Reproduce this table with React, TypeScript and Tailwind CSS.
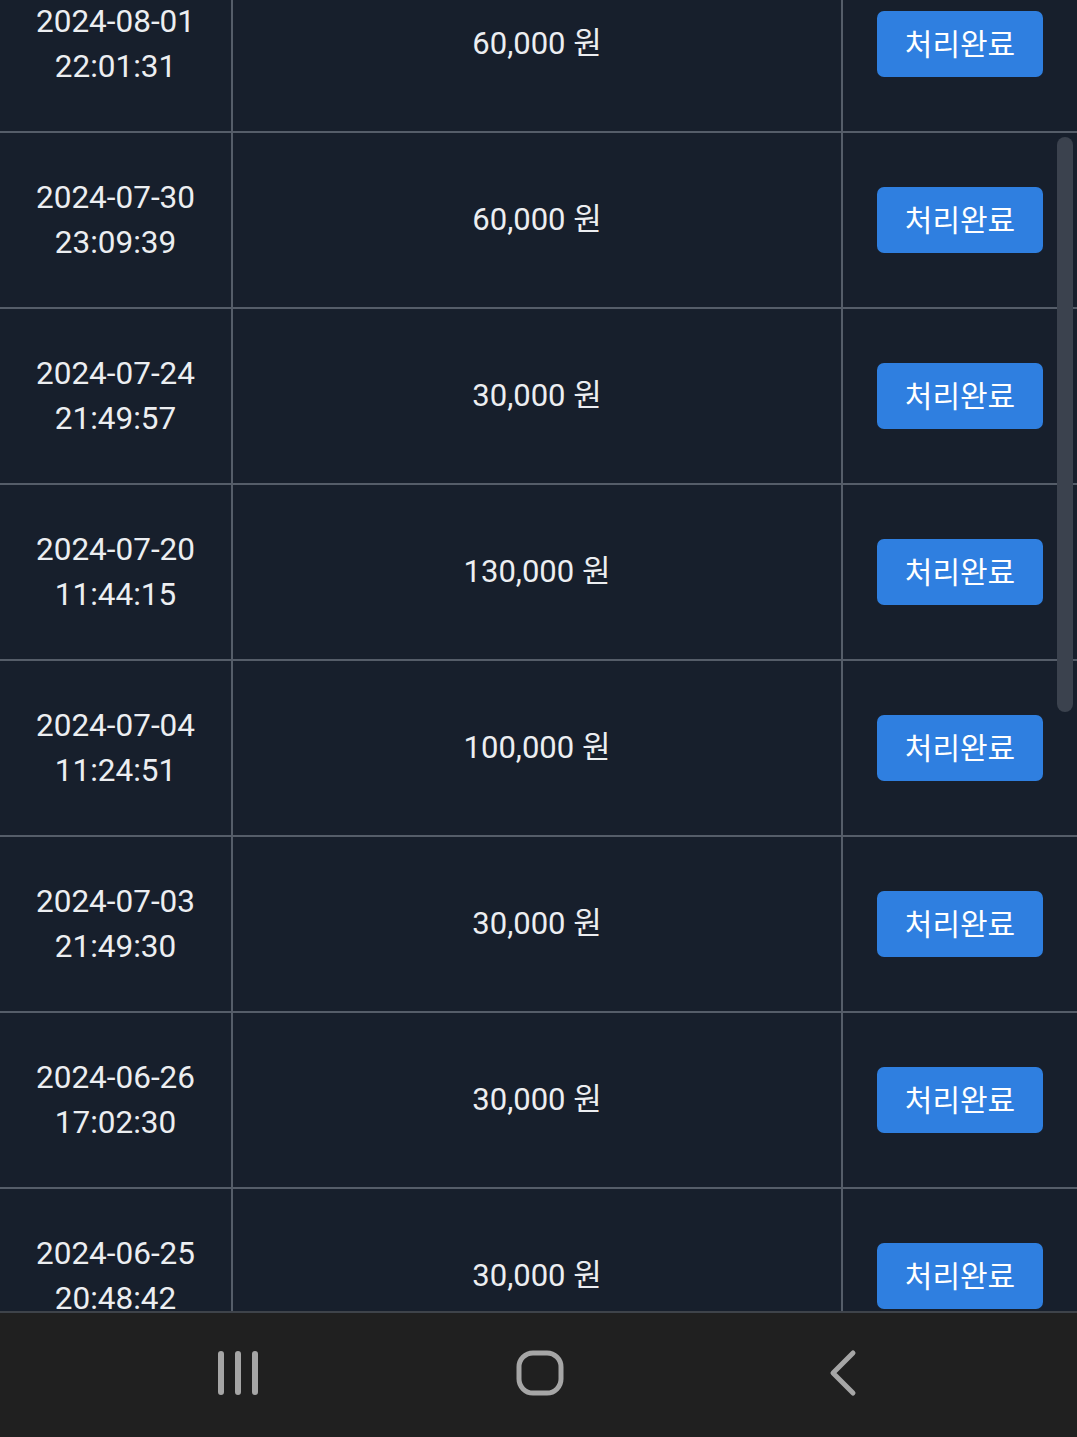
const ROWS = [
  { date: "2024-08-01", time: "22:01:31", amount: "60,000" },
  { date: "2024-07-30", time: "23:09:39", amount: "60,000" },
  { date: "2024-07-24", time: "21:49:57", amount: "30,000" },
  { date: "2024-07-20", time: "11:44:15", amount: "130,000" },
  { date: "2024-07-04", time: "11:24:51", amount: "100,000" },
  { date: "2024-07-03", time: "21:49:30", amount: "30,000" },
  { date: "2024-06-26", time: "17:02:30", amount: "30,000" },
  { date: "2024-06-25", time: "20:48:42", amount: "30,000" },
];

function Row({ row }: { row: (typeof ROWS)[number] }) {
  return (
    <div className="flex h-[176px] shrink-0 border-b-2 border-[#555d69]">
      <div className="flex w-[233px] shrink-0 flex-col items-center justify-center border-r-2 border-[#555d69] text-[31.5px] leading-[45px]">
        <span>{row.date}</span>
        <span>{row.time}</span>
      </div>
      <div className="flex w-[610px] shrink-0 items-center justify-center border-r-2 border-[#555d69] text-[31px]">
        {row.amount} 원
      </div>
      <div className="flex flex-1 items-center justify-center">
        <button className="h-[66px] w-[166px] rounded-[7px] bg-[#2f7fe0] text-[30px] text-white">
          처리완료
        </button>
      </div>
    </div>
  );
}

export default function App() {
  return (
    <div
      className="flex h-[1437px] w-[1077px] flex-col overflow-hidden bg-[#171f2c] text-[#eceef1]"
      style={{ fontFamily: "Roboto, 'Noto Sans CJK KR', sans-serif" }}
    >
      <div className="relative h-[1311px] overflow-hidden">
        <div className="-mt-[43px] flex flex-col">
          {ROWS.map((row) => (
            <Row key={row.date + row.time} row={row} />
          ))}
        </div>
        {/* scroll thumb */}
        <div className="absolute right-[4px] top-[137px] h-[575px] w-[16px] rounded-full bg-[#3b424e]" />
      </div>

      <div className="flex h-[126px] items-center border-t-2 border-[#3e434a] bg-[#202020] pb-[4px] pl-[216px] text-[#a6a6a6]">
        <svg width="44" height="46" viewBox="0 0 44 46" fill="none" stroke="currentColor" strokeWidth="6" strokeLinecap="round">
          <path d="M5 4v38M22 4v38M39 4v38" />
        </svg>
        <svg className="ml-[255px]" width="50" height="50" viewBox="0 0 50 50" fill="none" stroke="currentColor" strokeWidth="5">
          <rect x="4" y="5" width="42" height="40" rx="14" />
        </svg>
        <svg className="ml-[260px]" width="34" height="48" viewBox="0 0 34 48" fill="none" stroke="currentColor" strokeWidth="5" strokeLinecap="round" strokeLinejoin="round">
          <path d="M28 4L8 24l20 20" />
        </svg>
      </div>
    </div>
  );
}
